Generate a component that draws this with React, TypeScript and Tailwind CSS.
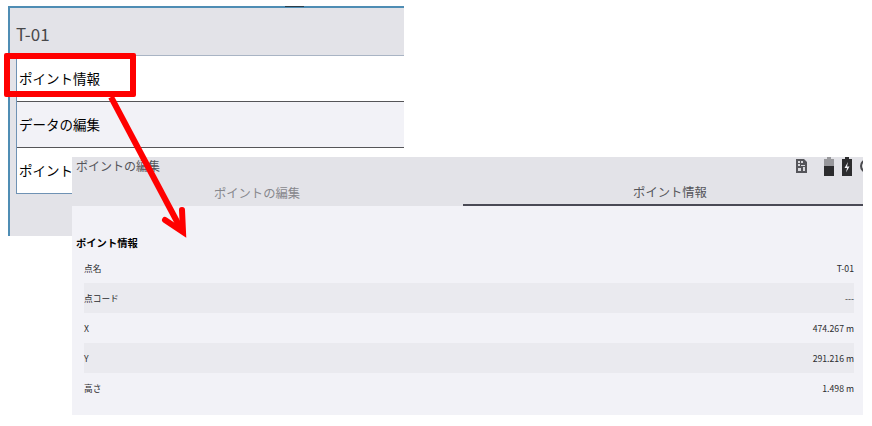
const FONT = "font-['Noto_Sans_CJK_JP','Noto_Sans',sans-serif]"

const menuRows = [
  { label: "ポイント情報", bg: "bg-white" },
  { label: "データの編集", bg: "bg-[#f2f2f7]" },
  { label: "ポイント", bg: "bg-white" },
]

const infoRows = [
  { label: "点名", value: "T-01", striped: false },
  { label: "点コード", value: "---", striped: true },
  { label: "X", value: "474.267 m", striped: false },
  { label: "Y", value: "291.216 m", striped: true },
  { label: "高さ", value: "1.498 m", striped: false },
]

function MenuScreen() {
  return (
    <div className="absolute left-[8px] top-[6px] w-[396px] h-[230px] bg-[#e3e3e8] border-l-2 border-t-2 border-[#4f8db4] flex flex-col">
      <div className="absolute left-[275px] top-[-2px] w-[19px] h-[1px] bg-[#2c3e4a]" />
      <div className="h-[48px] shrink-0 flex items-center pl-[6px] pt-[5px] text-[17px] text-[#48484a] border-b border-[#a9b4c4]">
        T-01
      </div>
      <div className="ml-[6px] border-l border-[#6f92b4]">
        {menuRows.map((row, i) => (
          <div
            key={row.label}
            className={`h-[46px] flex items-center pl-[2px] text-[13.5px] text-black border-b ${row.bg} ${
              i === 2 ? "border-[#6f92b4]" : "border-[#555558]"
            }`}
          >
            {row.label}
          </div>
        ))}
      </div>
    </div>
  )
}

function StatusIcons() {
  return (
    <div className="flex items-center mr-[-11px]">
      <svg width="11" height="14" viewBox="0 0 11 14" className="mr-[17px] shrink-0">
        <path d="M0 0h8l3 3v11H0z" fill="#55555a" />
        <path d="M2 2h2v2H2zM5 2h2v2H5zM2 5h2v2H2zM5 6h4v1H5zM2 9h3v3H2zM7 8h2v4H7z" fill="#d8d8dc" />
      </svg>
      <svg width="10" height="19" viewBox="0 0 10 19" className="mr-[8px] shrink-0">
        <path d="M3 0h4v2h3v7H0V2h3z" fill="#98989c" />
        <path d="M0 9h10v10H0z" fill="#2c2c2e" />
      </svg>
      <svg width="10" height="19" viewBox="0 0 10 19" className="mr-[8px] shrink-0">
        <path d="M3 0h4v2h3v17H0V2h3z" fill="#2c2c2e" />
        <path d="M6 5 2.5 11H5l-1 4.5L7.500 9.500H5z" fill="#f2f2f7" />
      </svg>
      <span className="w-[14px] h-[14px] rounded-full border-2 border-[#4a4a4e] shrink-0" />
    </div>
  )
}

function InfoScreen() {
  return (
    <div className="absolute left-[72px] top-[157px] w-[791px] h-[258px] bg-[#f2f2f7] overflow-hidden">
      <div className="h-[18px] bg-[#e3e3e8] flex items-center justify-between pl-[4px] text-[12px] text-[#55555a]">
        <span>ポイントの編集</span>
        <StatusIcons />
      </div>
      <div className="h-[31px] bg-[#e3e3e8] flex text-[12.3px]">
        <div className="w-[391px] pt-[5px] pr-[21px] flex items-center justify-center text-[#87878c]">ポイントの編集</div>
        <div className="flex-1 pt-[5px] pl-[14px] flex items-center justify-center text-[#55555a] border-b-2 border-[#4a4a55]">
          ポイント情報
        </div>
      </div>
      <div className="pt-[29px] pl-[4px] text-[10.3px] font-bold text-black leading-[16px]">ポイント情報</div>
      <div className="mt-[2px] ml-[12px] mr-[9px]">
        {infoRows.map((row) => (
          <div
            key={row.label}
            className={`h-[30px] pt-[2px] flex items-center justify-between text-[8.7px] text-[#2c2c2e] ${
              row.striped ? "bg-[#eaeaef]" : ""
            }`}
          >
            <span>{row.label}</span>
            <span>{row.value}</span>
          </div>
        ))}
      </div>
    </div>
  )
}

function Callout() {
  return (
    <>
      <div className="absolute left-[4px] top-[53px] w-[132px] h-[44px] border-[6px] border-[#ff0000] rounded-[2px]" />
      <svg className="absolute left-0 top-0" width="872" height="426" viewBox="0 0 872 426" fill="none">
        <path d="M111 97 182 231" stroke="#ff0000" strokeWidth="6" />
        <path d="M165 220 183 232 182 210" stroke="#ff0000" strokeWidth="6" strokeLinecap="round" />
      </svg>
    </>
  )
}

export default function App() {
  return (
    <div className={`relative w-[872px] h-[426px] bg-white overflow-hidden ${FONT}`}>
      <MenuScreen />
      <InfoScreen />
      <Callout />
    </div>
  )
}
